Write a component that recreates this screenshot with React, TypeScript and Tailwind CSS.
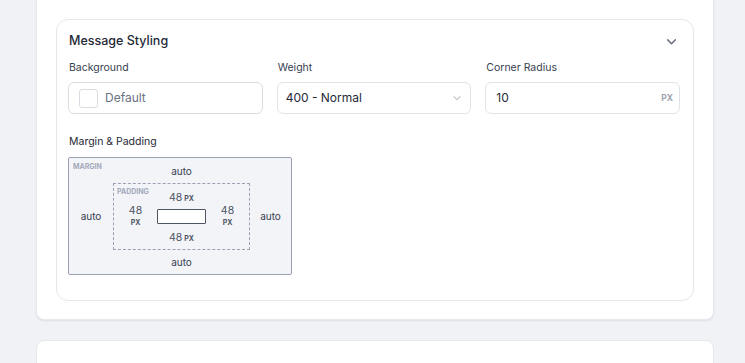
import React from "react";

function Chevron({ className }: { className?: string }) {
  return (
    <svg viewBox="0 0 12 12" className={className} fill="none" stroke="currentColor" strokeWidth={1.4} strokeLinecap="round" strokeLinejoin="round">
      <path d="M2.5 4.5 L6 8 L9.5 4.5" />
    </svg>
  );
}

export default function App() {
  return (
    <div className="h-[363px] w-[745px] overflow-hidden bg-[#f1f2f6]" style={{ fontFamily: "Inter, 'Noto Sans', sans-serif" }}>
      <div className="ml-[36px] -mt-[10px] w-[678px] rounded-[8px] bg-white px-[19px] pb-[18px] pt-[28px] shadow-[0_1px_2px_rgba(0,0,0,0.08)] border border-[#e6e8ee]">
        <div className="rounded-[12px] border border-[#e5e7eb] pl-[11px] pr-[13px] pb-[25px] pt-[13px]">
          <div className="flex h-[16px] items-center justify-between">
            <span className="ml-[1px] text-[12.5px] font-medium leading-[16px] text-[#1f2937]">Message Styling</span>
            <Chevron className="mr-[2px] h-[13px] w-[13px] text-[#6b7280]" />
          </div>
          <div className="mt-[12px] grid grid-cols-3 gap-[14px]">
            <div>
              <div className="ml-[1px] text-[10.5px] leading-[14px] text-[#374151]">Background</div>
              <div className="mt-[7px] flex h-[32px] items-center rounded-[6px] border border-[#d9dce3] px-[10px]">
                <div className="h-[19px] w-[19px] rounded-[3px] border border-[#d9dce3]" />
                <span className="ml-[7px] text-[12px] text-[#6b7280]">Default</span>
              </div>
            </div>
            <div>
              <div className="ml-[1px] text-[10.5px] leading-[14px] text-[#374151]">Weight</div>
              <div className="mt-[7px] flex h-[32px] items-center justify-between rounded-[6px] border border-[#e1e3e8] pl-[8px] pr-[8px]">
                <span className="text-[12px] text-[#1f2937]">400 - Normal</span>
                <Chevron className="h-[10px] w-[10px] text-[#c3c7cf]" />
              </div>
            </div>
            <div>
              <div className="ml-[1px] text-[10.5px] leading-[14px] text-[#374151]">Corner Radius</div>
              <div className="mt-[7px] flex h-[32px] items-center justify-between rounded-[6px] border border-[#e1e3e8] pl-[10px] pr-[6px]">
                <span className="text-[12px] text-[#1f2937]">10</span>
                <span className="text-[8.5px] font-bold text-[#9ca3af]">PX</span>
              </div>
            </div>
          </div>
          <div className="ml-[1px] mt-[21px] text-[10.5px] leading-[14px] text-[#1f2937]">Margin &amp; Padding</div>
          <div className="relative mt-[8px] grid h-[118px] w-[224px] grid-cols-[44px_1fr_41px] grid-rows-[25px_1fr_25px] rounded-[2px] border border-[#9aa1b3] bg-[#f3f4f8] text-[10px] text-[#374151]">
            <span className="absolute left-[4px] top-[4px] text-[7px] font-bold text-[#a3a9bb]">MARGIN</span>
            <div />
            <div className="flex items-center justify-center pt-[1px]">auto</div>
            <div />
            <div className="flex items-center justify-center">auto</div>
            <div className="relative grid grid-cols-[43px_49px_43px] grid-rows-[25px_15px_25px] border border-dashed border-[#9aa1b3] text-[#4b5563]">
              <span className="absolute left-[3px] top-[3px] text-[7px] font-bold text-[#a3a9bb]">PADDING</span>
              <div />
              <div className="flex items-baseline justify-center pt-[6px] text-[10.5px]">48<span className="ml-[2px] text-[7px] font-bold">PX</span></div>
              <div />
              <div className="flex flex-col items-center justify-center leading-[12px]"><span className="text-[10.5px]">48</span><span className="text-[7px] font-bold">PX</span></div>
              <div className="rounded-[1px] border border-[#4b5563] bg-white" />
              <div className="flex flex-col items-center justify-center leading-[12px]"><span className="text-[10.5px]">48</span><span className="text-[7px] font-bold">PX</span></div>
              <div />
              <div className="flex items-baseline justify-center pt-[6px] text-[10.5px]">48<span className="ml-[2px] text-[7px] font-bold">PX</span></div>
              <div />
            </div>
            <div className="flex items-center justify-center">auto</div>
            <div />
            <div className="flex items-center justify-center">auto</div>
            <div />
          </div>
        </div>
      </div>
      <div className="ml-[36px] mt-[20px] h-[40px] w-[678px] rounded-[8px] border border-[#e6e8ee] bg-white" />
    </div>
  );
}
